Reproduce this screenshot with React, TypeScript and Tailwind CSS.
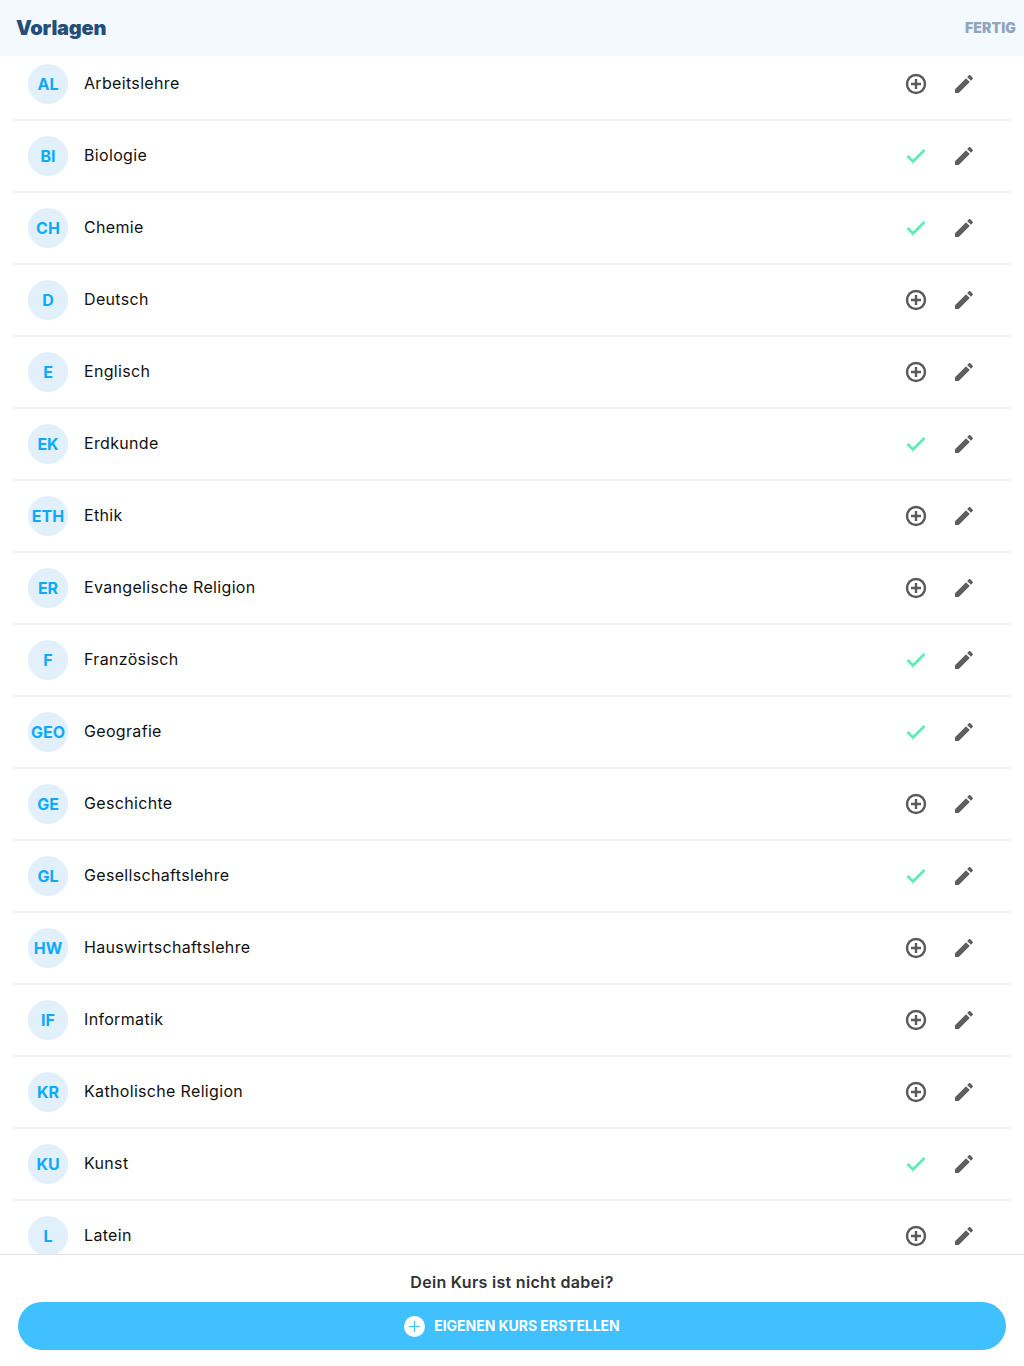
const rows: [string, string, boolean][] = [
  ["AL", "Arbeitslehre", false],
  ["BI", "Biologie", true],
  ["CH", "Chemie", true],
  ["D", "Deutsch", false],
  ["E", "Englisch", false],
  ["EK", "Erdkunde", true],
  ["ETH", "Ethik", false],
  ["ER", "Evangelische Religion", false],
  ["F", "Französisch", true],
  ["GEO", "Geografie", true],
  ["GE", "Geschichte", false],
  ["GL", "Gesellschaftslehre", true],
  ["HW", "Hauswirtschaftslehre", false],
  ["IF", "Informatik", false],
  ["KR", "Katholische Religion", false],
  ["KU", "Kunst", true],
  ["L", "Latein", false],
];

function Pencil() {
  return (
    <svg width="26" height="26" viewBox="0 0 24 24" fill="#5f5f5f">
      <path d="M3 17.25V21h3.75L17.81 9.94l-3.75-3.75L3 17.25zM20.71 7.04c.39-.39.39-1.02 0-1.41l-2.34-2.34c-.39-.39-1.02-.39-1.41 0l-1.83 1.83 3.75 3.75 1.83-1.83z" />
    </svg>
  );
}

function PlusCircle() {
  return (
    <svg width="22" height="22" viewBox="0 0 22 22" fill="none" stroke="#5a5a5a" strokeWidth="2.4">
      <circle cx="11" cy="11" r="9" />
      <path d="M11 6v10M6 11h10" />
    </svg>
  );
}

function Check() {
  return (
    <svg width="20" height="16" viewBox="0 0 20 16" fill="none" stroke="#5FEDB0" strokeWidth="2.8">
      <path d="M1.5 8l5.5 5.5L18.5 2" />
    </svg>
  );
}

export default function App() {
  return (
    <div className="flex h-[1366px] w-[1024px] flex-col overflow-hidden bg-white font-['Inter','Roboto',sans-serif]">
      <header className="relative z-10 flex h-14 shrink-0 items-center justify-between bg-[#f4f9ff] pl-4 pr-2">
        <h1 className="text-xl font-black tracking-[-0.2px] text-[#234e78]">Vorlagen</h1>
        <span className="text-sm font-black tracking-[0.1px] text-[#8fa6bf]">FERTIG</span>
      </header>
      <main className="min-h-0 flex-1 overflow-hidden">
        <ul className="-mt-[7px]">
          {rows.map(([code, name, done]) => (
            <li key={code} className="mx-3 flex h-[72px] items-center border-b-2 border-[#f2f2f2] pl-4">
              <span className="flex h-10 w-10 shrink-0 items-center justify-center rounded-full bg-[#e1f0fb] text-base font-bold text-[#0eaaf8]">
                {code}
              </span>
              <span className="mb-[2px] ml-4 flex-1 text-base tracking-[0.33px] text-[#111]">{name}</span>
              <span className="flex w-6 justify-center">{done ? <Check /> : <PlusCircle />}</span>
              <span className="ml-6 mr-[36px] flex w-6 justify-center">
                <Pencil />
              </span>
            </li>
          ))}
        </ul>
      </main>
      <footer className="flex h-28 shrink-0 flex-col items-center border-t border-[#e3e3e3] bg-white px-[18px] pt-[17px]">
        <p className="text-base font-semibold leading-5 tracking-[0.3px] text-[#333]">Dein Kurs ist nicht dabei?</p>
        <button className="mt-[10px] flex h-12 w-full items-center justify-center gap-[9px] rounded-3xl bg-[#40c0ff] text-sm font-bold tracking-[-0.04px] text-white">
          <svg width="21" height="21" viewBox="0 0 21 21">
            <circle cx="10.5" cy="10.5" r="10.5" fill="#fff" />
            <path d="M10.5 5v11M5 10.5h11" stroke="#40c0ff" strokeWidth="1.2" />
          </svg>
          EIGENEN KURS ERSTELLEN
        </button>
      </footer>
    </div>
  );
}
